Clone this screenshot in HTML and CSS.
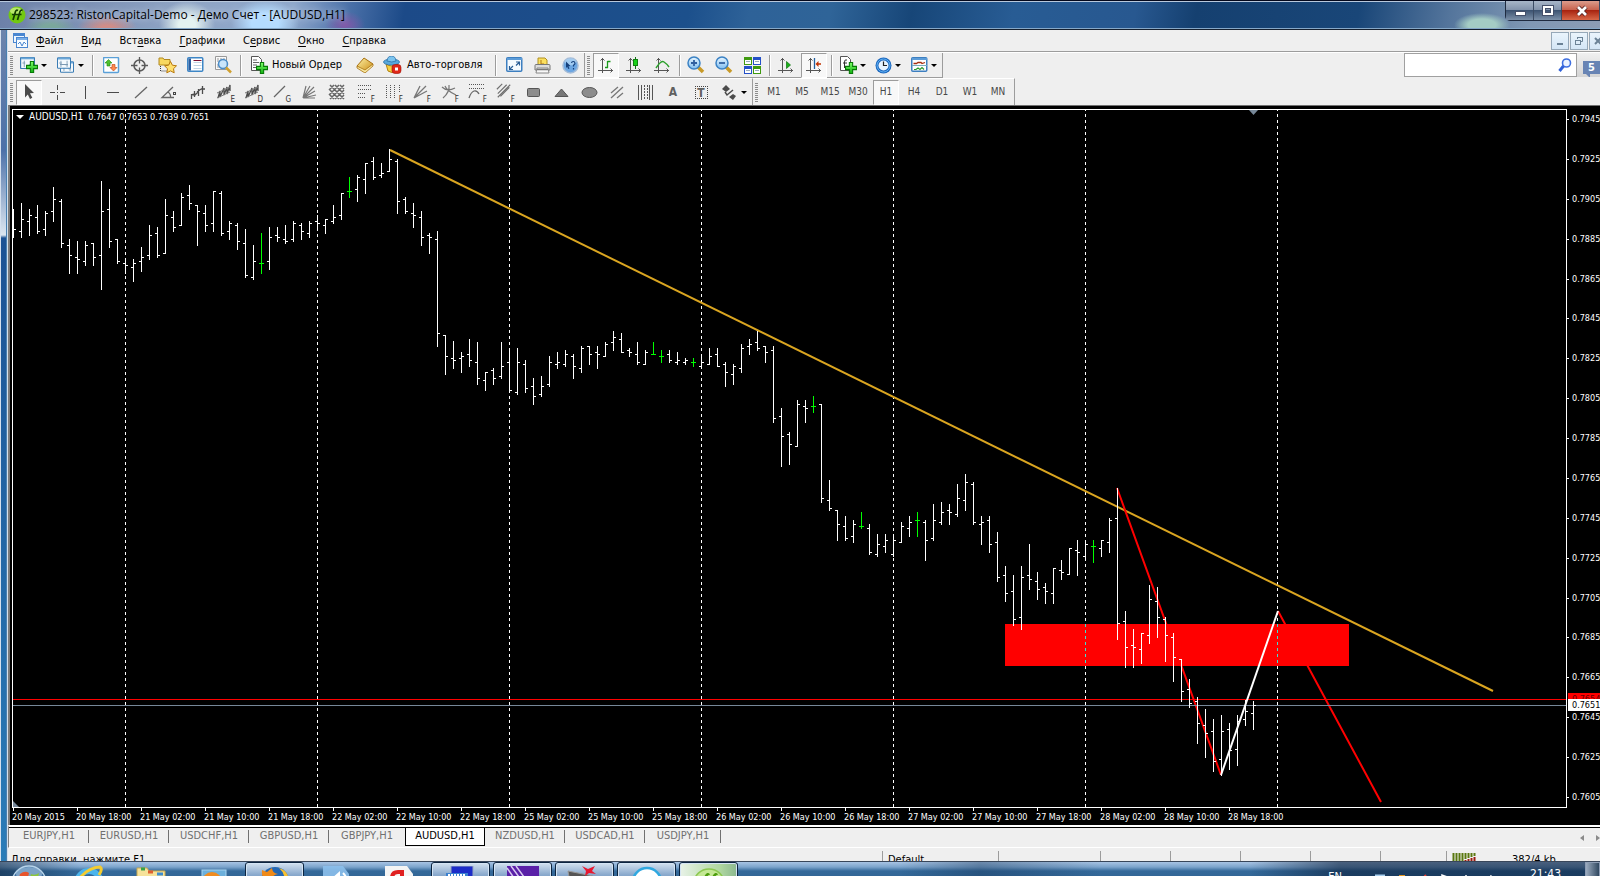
FILE: index.html
```html
<!DOCTYPE html>
<html lang="ru">
<head>
<meta charset="utf-8">
<title>298523: RistonCapital-Demo - Демо Счет - [AUDUSD,H1]</title>
<link rel="stylesheet" href="styles.css">
</head>
<body>
<svg class="defs" aria-hidden="true">
  <defs>
    <linearGradient id="gGlass" x1="0" y1="0" x2="0" y2="1"><stop offset="0" stop-color="#e8f6ff"/><stop offset="1" stop-color="#7fbdf0"/></linearGradient>
    <linearGradient id="gGold" x1="0" y1="0" x2="1" y2="1"><stop offset="0" stop-color="#fff3a8"/><stop offset="1" stop-color="#c98a10"/></linearGradient>
    <linearGradient id="gGreen" x1="0" y1="0" x2="0" y2="1"><stop offset="0" stop-color="#7fff6a"/><stop offset="1" stop-color="#10b010"/></linearGradient>
  </defs>
  <symbol id="plus" viewBox="0 0 11 11"><path d="M4 .5h3v3.500h3.500v3H7v3.500H4V7H.5V4H4z" fill="url(#gGreen)" stroke="#067a06"/></symbol>
  <symbol id="win" viewBox="0 0 16 13"><rect x=".5" y=".5" width="15" height="12" rx="1" fill="#f4f9fd" stroke="#3a7cb4" stroke-width="1.300"/><path d="M1 1.500h14" stroke="#6aa6d8" stroke-width="2"/><path d="M4.500 4v7M2.500 6.500h3M11.500 4v7M9.500 8.500h3" stroke="#7c9ab4"/></symbol>
  <symbol id="axes" viewBox="0 0 16 16"><path d="M4.500 1v15M0 13.500h15M2.500 3.500l2-2 2 2M12.500 11.500l2 2-2 2" fill="none" stroke="#555"/></symbol>
  <symbol id="channel" viewBox="0 0 18 18"><path d="M2 15l2-7v6l4-9v7l3-8v7l3-9v6" fill="none" stroke="#4b4b4b" stroke-width="1.300"/><path d="M1 10l13-6M1 15l13-6" stroke="#777"/></symbol>
  <symbol id="hatch" viewBox="0 0 18 18"><path d="M2 12L12 2M5 15L15 5M1 7l6-6M2 16L16 2" stroke="#707070" stroke-width="1.300"/></symbol>
</svg>

<header class="titlebar">
  <svg class="app-icon" width="18" height="18" viewBox="0 0 18 18"><circle cx="9" cy="9" r="8.500" fill="#72c812"/><ellipse cx="8" cy="5" rx="6" ry="3.500" fill="#c8f080" opacity=".8"/><path d="M5 14l2.500-8.500q.8-2 2.500-1M9.500 14L12 5.500q.8-2 2.500-1M4 8.500h9.500" fill="none" stroke="#123c00" stroke-width="1.700"/></svg>
  <h1 class="title">298523: RistonCapital-Demo - Демо Счет - [AUDUSD,H1]</h1>
  <div class="window-buttons">
    <button aria-label="Свернуть"><svg width="12" height="12"><rect x="1.500" y="6.500" width="10" height="4" fill="#fff" stroke="#45506a"/></svg></button>
    <button aria-label="Развернуть"><svg width="12" height="12"><rect x="2" y="2" width="8" height="7" fill="none" stroke="#45506a" stroke-width="4"/><rect x="2" y="2" width="8" height="7" fill="none" stroke="#fff" stroke-width="2"/></svg></button>
    <button class="close" aria-label="Закрыть"><svg width="12" height="12"><path d="M2 2l8 8M10 2l-8 8" stroke="#522" stroke-width="4.500"/><path d="M2 2l8 8M10 2l-8 8" stroke="#fff" stroke-width="2.700"/></svg></button>
  </div>
</header>

<div class="frame">
  <div class="frame-edge"></div>
  <main class="client">
    <nav class="menubar">
      <svg class="doc-icon" width="15" height="15"><rect x=".5" y=".5" width="11" height="9" fill="#eef6ff" stroke="#4a86d0"/><path d="M1 2h10" stroke="#4a86d0" stroke-width="2"/><rect x="3.500" y="4.500" width="11" height="10" fill="#f6fbff" stroke="#4a86d0"/><path d="M4 6h10" stroke="#7aaee8" stroke-width="2"/><path d="M5 11l2-2 2 4 2-4 2 2" fill="none" stroke="#4a86d0"/></svg>
      <button><u>Ф</u>айл</button><button><u>В</u>ид</button><button>Вст<u>а</u>вка</button><button><u>Г</u>рафики</button><button>С<u>е</u>рвис</button><button><u>О</u>кно</button><button><u>С</u>правка</button>
      <div class="mdi-buttons">
        <button aria-label="Свернуть окно"><svg width="10" height="10"><path d="M2 8h6" stroke="#6b8296" stroke-width="2"/></svg></button>
        <button aria-label="Восстановить окно"><svg width="10" height="10"><path d="M3.500 3V1.500h5v4H7M3 1.500h6" fill="none" stroke="#6b8296"/><rect x="1.500" y="4.500" width="5" height="4" fill="none" stroke="#6b8296"/></svg></button>
        <button aria-label="Закрыть окно"><svg width="10" height="10"><path d="M2 2l6 6M8 2l-6 6" stroke="#6b8296" stroke-width="2"/></svg></button>
      </div>
    </nav>

    <div class="toolbar-row">
      <div class="toolbar main-tools">
        <i class="grip"></i>
        <button class="tool drop" aria-label="Новый график"><svg width="18" height="17"><use href="#win" width="15" height="12"/><use href="#plus" x="6" y="4" width="12" height="12"/></svg></button>
        <button class="tool drop" aria-label="Профили"><svg width="18" height="17"><use href="#win" x="3" y="4" width="14" height="12"/><use href="#win" width="14" height="12"/><path d="M3 7.500h8" stroke="#7c9ab4"/></svg></button>
        <i class="sep"></i>
        <button class="tool" aria-label="Обзор рынка"><svg width="17" height="17"><rect x=".5" y=".5" width="15" height="15" rx="1" fill="#fff" stroke="#5aa0d8" stroke-width="1.500"/><path d="M5.500 2.500l3.500 3.500H7v3H4V6H2z" fill="#4fc030" stroke="#1f8a10" stroke-width=".6"/><path d="M10.500 14l-3.500-3.500h2v-3h3v3h2z" fill="#ff8a50" stroke="#b84010" stroke-width=".6"/></svg></button>
        <button class="tool" aria-label="Окно данных"><svg width="17" height="17"><circle cx="8.500" cy="8.500" r="5.500" fill="none" stroke="#5a5a5a" stroke-width="1.500"/><path d="M8.500 0v6.500M8.500 10.500V17M0 8.500h6.500M10.500 8.500H17" stroke="#5a5a5a" stroke-width="1.300"/></svg></button>
        <button class="tool" aria-label="Навигатор"><svg width="19" height="18"><path d="M1 2h4l1 1.500h6V9H1z" fill="#f8d860" stroke="#b08820"/><path d="M2.500 10v5h6" fill="none" stroke="#333" stroke-dasharray="1 1"/><path d="M12.500 5.500l1.900 3.700 4.100.6-3 2.900.7 4.100-3.700-1.900-3.700 1.900.7-4.100-3-2.900 4.100-.6z" fill="#ffe070" stroke="#b8780c"/></svg></button>
        <button class="tool" aria-label="Терминал"><svg width="17" height="16"><rect x=".75" y=".75" width="15" height="13.500" rx="1" fill="#fff" stroke="#3d86c6" stroke-width="1.500"/><path d="M1.500 1.500h2.500v12h-2.500z" fill="#2a5ea0"/><path d="M6.500 3.500h8" stroke="#7a1030"/><path d="M6.500 5.500h8M6.500 8.500h8M6.500 11.500h8" stroke="#c0d4e4"/></svg></button>
        <button class="tool" aria-label="Тестер"><svg width="18" height="18"><path d="M1.500.5h11v13h-11z" fill="#fafafa" stroke="#999"/><path d="M4 2v4M7 2v3M10 2v3M4 8v4" stroke="#999"/><circle cx="9" cy="8" r="4.500" fill="#bfe0fa" fill-opacity=".85" stroke="#4a8cc8" stroke-width="1.500"/><path d="M12 11.500l5 5" stroke="#d0a030" stroke-width="2.500"/></svg></button>
        <i class="sep"></i>
        <button class="tool text" aria-label="Новый Ордер"><svg width="18" height="18"><path d="M1.500.5h7l3 3v11h-10z" fill="#fff" stroke="#555"/><path d="M3 4h4M3 6.500h6M3 9h4M3 11.500h3" stroke="#666"/><use href="#plus" x="6" y="6" width="12" height="12"/></svg>Новый Ордер</button>
        <button class="tool" aria-label="MetaEditor"><svg width="18" height="16"><path d="M1 9l7-8 9 6-8 8z" fill="url(#gGold)" stroke="#a87010"/><path d="M1 9v2l8 5 8-7V7l-8 6z" fill="#f8e8a0" stroke="#a87010" stroke-width=".8"/></svg></button>
        <button class="tool text wide" aria-label="Авто-торговля"><svg width="19" height="18"><path d="M3 8q6 4 12 0l-2 7q-4 3-8 0z" fill="#f6d040" stroke="#b08010"/><ellipse cx="8.500" cy="6" rx="8" ry="3" fill="#58a8dc" stroke="#2a70a8" stroke-width=".8"/><path d="M4 5q.5-5 4.500-5T13 5q-4 2-9 0z" fill="#7cc4ee" stroke="#2a70a8" stroke-width=".8"/><rect x="9" y="8.500" width="9" height="9" rx="3" fill="#e02818" stroke="#a01008" stroke-width=".6"/><rect x="12" y="11.500" width="3" height="3" fill="#fff"/></svg>Авто-торговля</button>
        <i class="sep"></i>
        <button class="tool" aria-label="Полный экран"><svg width="17" height="16"><rect x=".75" y=".75" width="15" height="13.500" rx="1" fill="#f6fbff" stroke="#3d7fc0" stroke-width="1.500"/><path d="M1 2h15" stroke="#5c9cd8" stroke-width="2"/><path d="M10 5h3.500v3.500M13.500 5L10 8.500M3.500 9v3.500H7M3.500 12.500L7 9" fill="none" stroke="#2a5e96" stroke-width="1.200"/></svg></button>
        <button class="tool" aria-label="Печать"><svg width="17" height="17"><path d="M4 8V1h7l2 2v5z" fill="#fbe060" stroke="#b09020"/><path d="M7 3v4h3" fill="none" stroke="#b07818"/><path d="M1 8.500q0-1 1-1h13q1 0 1 1V13H1z" fill="#dcdcdc" stroke="#777"/><path d="M3 11h11l1 5H2z" fill="#f8f8f8" stroke="#888"/><path d="M3 12.500h11" stroke="#777" stroke-width="1.500"/></svg></button>
        <button class="tool" aria-label="Справка"><svg width="17" height="17"><circle cx="8.500" cy="8.500" r="7.500" fill="#6ca6e2" stroke="#a4bcd8" stroke-width="1.500"/><ellipse cx="8.500" cy="5" rx="5.500" ry="3.500" fill="#b8dcf8" opacity=".7"/><path d="M4 4.500l4.500 4.500-2 .2 1 2.300-1.300.5-1-2.200L4 11z" fill="#15407c"/><path d="M9.500 6q.3-1.500 1.800-1.500T13 6.200q0 1-1.500 2v1.300M11.500 11v1.500" fill="none" stroke="#15407c" stroke-width="1.200"/></svg></button>
      </div>
      <div class="toolbar chart-tools">
        <i class="grip"></i>
        <button class="tool pressed" aria-label="Бары"><svg width="16" height="16"><use href="#axes" width="16" height="16"/><path d="M9.500 4v7M9.500 4.500h3M7 10.500h3" stroke="#1c9a1c" stroke-width="1.300"/></svg></button>
        <button class="tool" aria-label="Свечи"><svg width="16" height="16"><use href="#axes" width="16" height="16"/><path d="M9.500 0v12" stroke="#107010"/><rect x="7.500" y="2.500" width="4" height="6" fill="#18d018" stroke="#108010"/></svg></button>
        <button class="tool" aria-label="Линия"><svg width="16" height="16"><use href="#axes" width="16" height="16"/><path d="M2 11q5-8 8-6t5 5" fill="none" stroke="#2ca02c" stroke-width="1.500"/></svg></button>
        <i class="sep"></i>
        <button class="tool" aria-label="Увеличить"><svg width="18" height="18"><path d="M11 11l5 5" stroke="#c89a28" stroke-width="3.500"/><circle cx="7" cy="7" r="6" fill="url(#gGlass)" stroke="#3b82c4" stroke-width="1.500"/><path d="M4 7h6M7 4v6" stroke="#3060a0" stroke-width="1.800"/></svg></button>
        <button class="tool" aria-label="Уменьшить"><svg width="18" height="18"><path d="M11 11l5 5" stroke="#c89a28" stroke-width="3.500"/><circle cx="7" cy="7" r="6" fill="url(#gGlass)" stroke="#3b82c4" stroke-width="1.500"/><path d="M4 7h6" stroke="#3060a0" stroke-width="1.800"/></svg></button>
        <button class="tool" aria-label="Окна мозаикой"><svg width="17" height="17"><path d="M0 0h8v8H0zM9 9h8v8H9z" fill="#3f9a10"/><path d="M9 0h8v8H9zM0 9h8v8H0z" fill="#2450c8"/><path d="M1 3h6v4H1zM10 3h6v4h-6zM1 12h6v4H1zM10 12h6v4h-6z" fill="#fff"/><path d="M2 4.500h4M11 4.500h4M2 13.500h4M11 13.500h4" stroke="#9ab"/></svg></button>
        <i class="sep"></i>
        <button class="tool" aria-label="Автопрокрутка"><svg width="16" height="16"><use href="#axes" width="16" height="16"/><path d="M8.500 4.500l4 3.500-4 3.500z" fill="#18b018" stroke="#0c700c" stroke-width=".7"/></svg></button>
        <button class="tool pressed" aria-label="Сдвиг графика"><svg width="16" height="16"><use href="#axes" width="16" height="16"/><path d="M8.500 1v11" stroke="#1f5fa0" stroke-width="1.300"/><path d="M15 7h-4" stroke="#c03000" stroke-width="1.500"/><path d="M9.500 7l3-3v6z" fill="#c03000"/></svg></button>
        <i class="sep"></i>
        <button class="tool drop" aria-label="Индикаторы"><svg width="18" height="18"><path d="M1.500.5h7l3 3v11h-10z" fill="#fff" stroke="#555"/><path d="M8 4q-2.500-1-2.500 2v6M4 7h4" fill="none" stroke="#333"/><use href="#plus" x="6" y="6" width="12" height="12"/></svg></button>
        <button class="tool drop" aria-label="Периоды"><svg width="17" height="17"><circle cx="8.500" cy="8.500" r="8" fill="#1d68be"/><circle cx="8.500" cy="8.500" r="6.500" fill="none" stroke="#5fb0f4" stroke-width="1"/><circle cx="8.500" cy="8.500" r="5" fill="#e8f4ff"/><path d="M8.500 4.500v4h3.500" fill="none" stroke="#222" stroke-width="1.200"/></svg></button>
        <button class="tool drop" aria-label="Шаблоны"><svg width="17" height="16"><rect x=".75" y=".75" width="15" height="13.500" rx="1" fill="#fff" stroke="#3d7fc0" stroke-width="1.500"/><path d="M1 2h15" stroke="#5c9cd8" stroke-width="2"/><path d="M2.500 6.500h3l1.500-1h3l1 1 3-1" fill="none" stroke="#a83010" stroke-width="1.300"/><path d="M1 8.500h15" stroke="#7ab"/><path d="M3 12.500h2l2-1.500 2 1.500 2-2 2 2" fill="none" stroke="#2a9a2a" stroke-width="1.200"/></svg></button>
      </div>
      <div class="search">
        <input type="search" aria-label="Поиск">
        <svg width="15" height="15"><circle cx="8.500" cy="5" r="4" fill="#eaf2ff" stroke="#3f6fe0" stroke-width="1.600"/><path d="M5.500 8L1.500 13" stroke="#2f60d8" stroke-width="3"/></svg>
      </div>
      <button class="chat" aria-label="Сообщения"><span>5</span></button>
    </div>

    <div class="toolbar-row second">
      <div class="toolbar draw-tools">
        <i class="grip"></i>
        <button class="tool pressed" aria-label="Курсор"><svg width="18" height="18"><path d="M5 1l9 9-4 .3 2.300 4.500-2.300 1.200-2.200-4.500L5 14.500z" fill="#4b4b4b"/></svg></button>
        <button class="tool" aria-label="Перекрестие"><svg width="18" height="18"><path d="M9.500 2v5M9.500 12v5M2 9.500h5M12 9.500h5M9.500 9v1" stroke="#4b4b4b"/></svg></button>
        <button class="tool" aria-label="Вертикальная линия"><svg width="18" height="18"><path d="M9.500 3v13" stroke="#4b4b4b"/></svg></button>
        <button class="tool" aria-label="Горизонтальная линия"><svg width="18" height="18"><path d="M3 9.500h12" stroke="#4b4b4b"/></svg></button>
        <button class="tool" aria-label="Трендовая линия"><svg width="18" height="18"><path d="M3 15L15 4" stroke="#666" stroke-width="1.300"/></svg></button>
        <button class="tool" aria-label="Угол"><svg width="18" height="18"><path d="M13 4L2 14.500h12M8 9q3 2 2.500 5.500" fill="none" stroke="#666" stroke-width="1.300"/><rect x="13.500" y="9.500" width="2" height="2" fill="none" stroke="#444"/></svg></button>
        <button class="tool" aria-label="Канал регрессии"><svg width="18" height="18"><path d="M3.500 16v-5M3 12l4-1M6.500 14V8M6 13l4-4M10.500 13V6M9 9l4-3M14.500 11V3M13 6h4" fill="none" stroke="#4b4b4b" stroke-width="1.300"/></svg></button>
        <button class="tool sub" data-mark="E" aria-label="Равноудаленный канал"><svg width="18" height="18"><use href="#channel" width="18" height="18"/></svg></button>
        <button class="tool sub" data-mark="D" aria-label="Канал отклонений"><svg width="18" height="18"><use href="#channel" width="18" height="18"/></svg></button>
        <button class="tool sub" data-mark="G" aria-label="Линия Ганна"><svg width="18" height="18"><path d="M2 14L13 3" stroke="#666" stroke-width="1.300"/></svg></button>
        <button class="tool" aria-label="Веер Ганна"><svg width="18" height="18"><path d="M3 15L6 3M3 15L10 3M3 15L14 4M3 15L15 8M3 15L16 12M3 15h12" stroke="#777" stroke-width="1.200"/></svg></button>
        <button class="tool" aria-label="Сетка Ганна"><svg width="18" height="18"><path d="M1 7l5-5M1 12L11 2M2 16L16 2M7 16l9-9M12 16l4-4M1 11l5 5M1 6l10 10M2 2l14 14M7 2l9 9M12 2l4 4" stroke="#666" stroke-width="1.500"/></svg></button>
        <button class="tool sub" data-mark="F" aria-label="Линии Фибоначчи"><svg width="18" height="18"><path d="M2 2.500h14M2 6.500h14M2 10.500h8M2 14.500h8" stroke="#555" stroke-dasharray="1 1"/></svg></button>
        <button class="tool sub" data-mark="F" aria-label="Временные зоны Фибоначчи"><svg width="18" height="18"><path d="M2.500 2v13M6.500 2v13M10.500 2v13M15.500 2v7" stroke="#555" stroke-dasharray="1 1"/></svg></button>
        <button class="tool sub" data-mark="F" aria-label="Веер Фибоначчи"><svg width="18" height="18"><path d="M2 15L8 3M2 15L14 3M2 15L15 8" stroke="#777" stroke-width="1.300"/></svg></button>
        <button class="tool sub" data-mark="F" aria-label="Дуги Фибоначчи"><svg width="18" height="18"><path d="M2 4q5 5 13 1M9 2q1 7-6 13M5 3q2 5 11 9" fill="none" stroke="#777" stroke-width="1.200"/></svg></button>
        <button class="tool sub" data-mark="F" aria-label="Расширение Фибоначчи"><svg width="18" height="18"><path d="M1 1.500h16M1 5.500h16" stroke="#555" stroke-dasharray="1 1"/><path d="M1 15q2-6 5-7t5 3" fill="none" stroke="#666" stroke-width="1.300"/></svg></button>
        <button class="tool sub" data-mark="F" aria-label="Канал Фибоначчи"><svg width="18" height="18"><use href="#hatch" width="16" height="16"/></svg></button>
        <button class="tool" aria-label="Прямоугольник"><svg width="18" height="18"><rect x="3.500" y="5.500" width="12" height="8" rx="1" fill="#8c8c8c" stroke="#555"/></svg></button>
        <button class="tool" aria-label="Треугольник"><svg width="18" height="18"><path d="M3 13.500L9.500 6l6.500 7.500z" fill="#777" stroke="#555"/></svg></button>
        <button class="tool" aria-label="Эллипс"><svg width="18" height="18"><ellipse cx="9.500" cy="9.500" rx="7.500" ry="5" fill="#8c8c8c" stroke="#555"/></svg></button>
        <button class="tool" aria-label="Вилы Эндрюса"><svg width="18" height="18"><path d="M3 10l7-6M3 15L15 4M9 15l6-5" stroke="#777" stroke-width="1.300"/></svg></button>
        <button class="tool" aria-label="Циклические линии"><svg width="18" height="18"><path d="M2.500 2v15M5.500 2v15M13.500 2v15M16.500 2v15" stroke="#555"/><path d="M8.500 2v15M11.500 2v15" stroke="#555" stroke-dasharray="2 1"/></svg></button>
        <button class="tool letter" aria-label="Текст">A</button>
        <button class="tool letter boxed" aria-label="Текстовая метка"><span>T</span></button>
        <button class="tool drop" aria-label="Стрелки"><svg width="18" height="18"><path d="M2 6l4-4 4 4-4 3zM9 14l4-3 3 2-3 4z" fill="#4b4b4b"/><path d="M5 9l2 3 6-5" fill="none" stroke="#4b4b4b" stroke-width="1.500"/></svg></button>
      </div>
      <div class="toolbar periods">
        <i class="grip"></i>
        <button class="tool">M1</button><button class="tool">M5</button><button class="tool">M15</button><button class="tool">M30</button><button class="tool pressed">H1</button><button class="tool">H4</button><button class="tool">D1</button><button class="tool">W1</button><button class="tool">MN</button>
      </div>
    </div>

    <section class="chart" aria-label="AUDUSD,H1">
      <div class="plot">
        <svg class="canvas" width="100%" height="100%">
          <g transform="translate(-13 -110)">
            <g id="days"></g>
            <path class="gold" d="M390 150L1493 691"/>
            <path class="red" d="M1117 488L1221 775M1278 611L1381 802"/>
            <rect x="1005" y="624" width="344" height="42" fill="#f00"/>
            <path d="M1085.500 624v42M1277.500 624v42" stroke="#40e0d0" stroke-dasharray="3 3"/>
            <path d="M13 705.500H4000" stroke="#778899"/>
            <path d="M13 699.500H4000" stroke="#f00"/>
            <g id="bars" shape-rendering="crispEdges"></g>
            <path class="leg" d="M1221 775L1278 611"/>
            <path d="M1249 110h9l-4.500 5z" fill="#778899"/>
          </g>
        </svg>
        <div class="quote"><i></i><b>AUDUSD,H1</b><span>0.7647 0.7653 0.7639 0.7651</span></div>
        <i class="corner"></i>
      </div>
      <div class="prices"><span class="tag ask">0.7654</span><span class="tag bid">0.7651</span></div>
      <div class="times"></div>
    </section>

    <div class="tabs" role="tablist">
      <button role="tab">EURJPY,H1</button><button role="tab">EURUSD,H1</button><button role="tab">USDCHF,H1</button><button role="tab">GBPUSD,H1</button><button role="tab" class="short last">GBPJPY,H1</button><button role="tab" class="active" aria-selected="true">AUDUSD,H1</button><button role="tab">NZDUSD,H1</button><button role="tab">USDCAD,H1</button><button role="tab" class="short">USDJPY,H1</button>
      <div class="tab-arrows"><svg width="21" height="8"><path d="M5 1v6L1 4zM17 1v6l4-3z" fill="#8a8a8a"/></svg></div>
    </div>
    <footer class="status">
      <span class="hint">Для справки, нажмите F1</span><span class="w116">Default</span><span class="w102"></span><span class="w70"></span><span class="w70"></span><span class="w70"></span><span class="w70"></span><span class="w66"></span>
      <span class="link"><svg width="24" height="12"><path d="M1.500 0v12M4.500 0v12M7.500 0v12M10.500 0v12" stroke="#5a7810" stroke-width="2"/><path d="M13.500 0v6M16.500 0v5M19.500 0v4M22.500 0v3" stroke="#5a7810" stroke-width="2"/><path d="M13.500 7v5M16.500 6v6M19.500 5v7M22.500 4v8" stroke="#9a1c10" stroke-width="2"/></svg>382/4 kb</span>
    </footer>
  </main>
</div>

<div class="taskbar">
  <div class="apps">
    <button class="orb" aria-label="Пуск"><svg width="36" height="36"><circle cx="18" cy="18" r="17" fill="#3a6c9c" stroke="#b8d4ea" stroke-width="1.500"/><ellipse cx="18" cy="9" rx="13" ry="7" fill="#a8c8e4" opacity=".6"/><path d="M9 9q5-4 9-1l-2 9H7z" fill="#e8542c"/><path d="M20 9q4 2 8-1l-2 9h-8z" fill="#8cc63c"/></svg></button>
    <button aria-label="Internet Explorer"><svg width="36" height="34"><circle cx="18" cy="18" r="12" fill="none" stroke="#4ab4ec" stroke-width="6"/><path d="M5 18Q16 2 29 2q3 2-1 8" fill="none" stroke="#f4cc30" stroke-width="3"/></svg></button>
    <button aria-label="Проводник"><svg width="36" height="34"><path d="M4 3h10l2 3h16v24H4z" fill="#f6e29a" stroke="#c8a850"/><path d="M8 4h4" stroke="#38a048" stroke-width="3"/><path d="M15 7h5" stroke="#e06030" stroke-width="3"/><path d="M24 9h6" stroke="#3c8cd0" stroke-width="3"/></svg></button>
    <button aria-label="Медиаплеер"><svg width="36" height="34"><rect x="7" y="5" width="24" height="24" fill="#6cb0dc" stroke="#a8d4f0"/><circle cx="17" cy="17" r="10" fill="#f08c20"/><circle cx="17" cy="17" r="5" fill="#fbe8c8"/></svg></button>
    <button class="open" aria-label="Firefox"><svg width="36" height="34"><circle cx="18" cy="15" r="14" fill="#2468b4"/><path d="M5 4l5 2 5-4q0 5 6 6-8 2-7 8-10 0-9-12z" fill="#f08a18"/><path d="M22 2q10 3 10 14h-5q2-8-5-14z" fill="#f8c030"/></svg></button>
    <button aria-label="Звук"><svg width="36" height="34"><path d="M4 1h20l6 8v22H4z" fill="#8cc0ec" opacity=".9"/><path d="M12 14l9-8v20z" fill="#fff"/><path d="M24 8q6 6 2 14" fill="none" stroke="#fff" stroke-width="2"/></svg></button>
    <button aria-label="Яндекс"><svg width="36" height="34"><path d="M4 1h22l6 8v24H4z" fill="#f4f4f4"/><path d="M21 26V7h-4q-6 0-6 6t6 5" fill="none" stroke="#e02020" stroke-width="4"/></svg></button>
    <button class="open" aria-label="Клавиатура"><svg width="36" height="34"><rect x="8" y="0" width="22" height="18" fill="#1c2cc8" stroke="#98a8c0"/><rect x="3" y="7" width="22" height="16" fill="#3a80d0"/><path d="M5 9h18M5 12h18" stroke="#fff" stroke-width="2" stroke-dasharray="2 1"/></svg></button>
    <button class="open" aria-label="График"><svg width="36" height="34"><rect x="2" y="0" width="32" height="32" fill="#5a20a8"/><path d="M2 2l14 20M6 0l16 22M11 0l16 22" stroke="#d8c8f0" stroke-width="1.500"/></svg></button>
    <button class="open" aria-label="Запись"><svg width="36" height="34"><path d="M1 5l25 5v12L3 17z" fill="#555" stroke="#999"/><path d="M15 0l6 3 7-3-3 5 4 3-7-1-4 3 1-5z" fill="#e81830"/></svg></button>
    <button class="open" aria-label="Облако"><svg width="36" height="34"><circle cx="18" cy="16" r="14" fill="#fff" stroke="#30a8e0" stroke-width="2.500"/></svg></button>
    <button class="open green" aria-label="MetaTrader"><svg width="36" height="34"><ellipse cx="18" cy="17" rx="15" ry="14" fill="#c4e894" stroke="#8cc850" stroke-width="1.500"/><path d="M12 18l3-8q2-3 3-1M20 18l3-8q2-3 3-1" fill="none" stroke="#4c9c0c" stroke-width="2.500"/></svg></button>
  </div>
  <div class="tray"><span class="lang">EN</span>
    <svg width="120" height="12"><path d="M1 3h10M0 5h12" stroke="#a8d0f0" stroke-width="3"/><path d="M25 2h6v3h4v6H25z" fill="#e89820"/><path d="M52 2l-3 3v6" stroke="#e84030" stroke-width="2" fill="none"/><path d="M68 12V2l8 3" stroke="#fff" fill="none" stroke-width="1.500"/><path d="M92 4h14M92 2v6" stroke="#fff" stroke-width="1.500"/><path d="M117 2v8l-3-4" stroke="#fff" fill="#fff"/></svg>
    <time>21:43</time><button class="peek" aria-label="Свернуть все окна"></button></div>
</div>
<script src="chart.js"></script>
</body>
</html>
```
FILE: chart.js
```js
// One bar per hour, 8px apart: [high, low, open, close] as y positions.
// A trailing 1 marks a bar whose open equals its close.
const bars = [
[209,238,229,229],[203,238,231,219],[209,236,221,215],[205,234,217,231],[211,236,229,213],[187,222,211,199],[199,248,201,243],[239,274,245,255],
[241,274,257,259],[241,266,261,245],[243,266,243,257],[181,290,255,211],[189,248,209,241],[239,264,239,261],[259,274,263,265],[259,282,267,263],
[247,272,261,257],[225,260,255,235],[227,258,233,255],[199,254,253,215],[211,232,217,227],[193,226,225,197],[185,210,195,203],[205,246,205,211],
[205,232,213,225],[191,232,223,191],[191,236,193,233],[221,240,231,223],[223,250,225,241],[229,278,243,275],[245,280,277,261],[233,274,263,263,1],
[227,270,261,237],[227,242,235,237],[225,244,239,241],[221,242,239,223],[223,240,225,231],[221,238,233,223],[215,231,221,223],[219,234,225,219],
[205,224,221,217],[193,220,215,193],[177,198,191,191,1],[175,202,189,177],[163,194,179,163],[157,180,161,177],[163,178,175,173],[149,172,171,159],
[159,214,161,201],[197,214,199,211],[203,228,213,215],[211,246,217,237],[233,254,235,237],[231,347,239,333],[335,375,335,356],[341,369,358,360],
[352,373,358,356],[339,367,354,360],[342,385,362,378],[372,391,380,372],[368,385,370,378],[342,379,376,366],[348,393,362,390],[348,395,392,362],
[360,393,364,388],[378,405,386,396],[376,397,394,386],[356,387,384,362],[352,369,364,362],[350,367,364,354],[354,379,356,366],[346,373,368,348],
[346,365,346,354],[346,369,352,354],[342,357,356,344],[331,351,342,337],[333,353,339,352],[348,357,350,352],[342,365,354,362],[350,365,364,352],
[342,355,354,354,1],[350,363,356,356,1],[350,363,354,360],[352,365,362,360],[358,365,362,360],[358,367,362,362,1],[354,368,366,362],[348,365,364,356],
[348,367,354,366],[362,387,364,372],[364,385,374,366],[344,373,368,348],[339,355,346,344],[331,351,342,348],[346,363,346,352],[346,423,350,418],
[408,467,416,436],[432,465,434,444],[400,447,446,404],[400,423,406,408],[396,413,406,406,1],[404,503,404,498],[480,511,500,508],[510,541,510,524],
[516,541,526,538],[520,543,536,524],[512,529,526,526,1],[524,555,528,552],[534,557,554,544],[534,553,546,540],[534,557,554,540],[522,543,542,526],
[516,537,528,522],[512,537,520,520,1],[520,561,522,540],[504,541,538,520],[502,525,522,512],[504,525,510,512],[484,517,514,498],[474,511,500,482],
[482,525,484,522],[516,545,524,522],[516,553,520,544],[532,582,542,577],[566,602,575,593],[575,626,591,619],[566,630,617,577],[544,590,575,579],
[572,600,581,589],[583,604,587,591],[568,604,593,568],[560,580,570,572],[548,575,574,548],[540,576,550,552],[540,560,556,544],[540,563,546,546,1],
[540,557,548,540],[518,553,542,520],[488,640,518,623],[611,668,621,647],[629,668,645,647],[633,664,649,633],[585,644,635,599],[587,638,601,617],
[617,662,619,635],[633,682,637,657],[659,702,659,691],[679,708,689,703],[697,744,701,723],[709,758,725,733],[719,772,731,761],[715,776,759,731],
[723,770,729,750],[715,766,749,721],[700,726,719,711],[701,730,713,705]
];
const NS = 'http://www.w3.org/2000/svg';
const draw = (parent, d, cls) => {
  const p = document.createElementNS(NS, 'path');
  p.setAttribute('d', d);
  p.setAttribute('class', cls);
  parent.append(p);
};

let up = '', flat = '';
bars.forEach(([h, l, o, c, same], i) => {
  const x = 13 + 8 * i;
  const d = `M${x} ${h}h1V${l}h-1zM${x - 2} ${o}h2v1h-2zM${x + 1} ${c}h2v1h-2z`;
  if (same) flat += d; else up += d;
});
const barLayer = document.getElementById('bars');
draw(barLayer, up, 'bar');
draw(barLayer, flat, 'bar flat');

let days = '';
for (let x = 125; x < 1300; x += 192) days += `M${x + 0.5} 108V2000`;
draw(document.getElementById('days'), days, 'day');

const prices = document.querySelector('.prices');
for (let p = 7945; p >= 7605; p -= 20) {
  const s = document.createElement('span');
  s.textContent = '0.' + p;
  prices.append(s);
}
const times = document.querySelector('.times');
const stamps = ['20 May 2015', '20 May 18:00'];
for (const d of [21, 22, 25, 26, 27, 28])
  for (const t of ['02:00', '10:00', '18:00']) stamps.push(`${d} May ${t}`);
for (const t of stamps) {
  const s = document.createElement('span');
  s.textContent = t;
  times.append(s);
}
```
FILE: styles.css
```css
* { box-sizing: border-box; }
body {
  margin: 0;
  height: 100vh;
  display: flex;
  flex-direction: column;
  overflow: hidden;
  background: #efefef;
  color: #000;
  font: 11px/14px "DejaVu Sans Condensed", "Open Sans", sans-serif;
}
button { margin: 0; padding: 0; border: 0; background: none; font: inherit; color: inherit; }
svg { display: block; flex: none; }
.defs { position: absolute; width: 0; height: 0; }

/* Title bar */
.titlebar {
  flex: none;
  height: 30px;
  display: flex;
  align-items: flex-start;
  padding-left: 8px;
  border-top: 1px solid #04081c;
  border-bottom: 1px solid #16202e;
  box-shadow: inset 0 1px #b8c8dc, inset 0 -1px #86a8c8;
  background:
    radial-gradient(ellipse 26px 12px at 50px 27px, #7aa79c 30%, transparent),
    radial-gradient(ellipse 30px 14px at 107px 27px, #d08d88 20%, transparent),
    radial-gradient(ellipse 28px 24px at 187px 24px, #e4f2f0 30%, transparent),
    radial-gradient(ellipse 34px 24px at 265px 22px, #b4dcff 40%, transparent),
    radial-gradient(ellipse 20px 14px at 345px 24px, #7c5aa8 10%, transparent),
    radial-gradient(ellipse 28px 12px at 1482px 24px, #a4ccc4 50%, transparent),
    linear-gradient(100deg, #6c80a8 0, #8fa4c4 180px, #8fa8cc 290px, #4a70a8 345px, #1c4a88 400px, #1c508c 680px, #2e6298 740px, #2f6498 820px, #174678 900px, #285c94 1000px, #285890 1120px, #154070 1180px, #194678 1340px, #54759c 1430px, #8098b4 1510px, #8c9cb4 100%);
}
.app-icon { margin-top: 5px; }
.title { flex: 1; margin: 5px 0 0 3px; font: 400 12px/18px "Open Sans", sans-serif; text-shadow: 0 0 6px #dce6f2; }
.window-buttons { display: flex; height: 20px; border: 1px solid #1f2b40; border-top: 0; border-right: 0; border-radius: 0 0 0 5px; }
.window-buttons button { width: 28px; display: flex; justify-content: center; align-items: center; border-right: 1px solid #3c4c64; background: linear-gradient(#a8b6c8, #8494ac 45%, #3d5472 50%, #7c90a8); }
.window-buttons .close { width: 38px; padding-left: 2px; background: linear-gradient(#dc9c8c, #c86450 45%, #a82410 50%, #d86848); }

/* Window frame */
.frame { flex: 1; min-height: 0; display: flex; }
.frame-edge { flex: none; width: 8px; border: solid #d4e0ee; border-width: 0 1px; box-shadow: inset -1px 0 #4880b0; background: linear-gradient(#6c84ac, #4c70a8 120px, #dce6f0 205px, #1c5294 208px, #2a7cb8 100%); }
.client { flex: 1; min-width: 0; display: flex; flex-direction: column; }

/* Menu */
.menubar { flex: none; height: 22px; display: flex; align-items: center; gap: 18px; padding-left: 5px; border-bottom: 1px solid #9c9c9c; }
.menubar u { text-underline-offset: 2px; }
.doc-icon { margin-right: -10px; }
.mdi-buttons { margin-left: auto; display: flex; gap: 1px; margin-right: -7px; }
.mdi-buttons button { width: 18px; height: 18px; display: flex; align-items: center; justify-content: center; border: 1px solid #96a8b8; background: linear-gradient(#eaf4fc, #d4e6f6); }

/* Toolbars */
.toolbar-row { flex: none; height: 26px; display: flex; border-top: 1px solid #fff; }
.toolbar-row.second { height: 27px; border-top: 0; }
.toolbar { display: flex; align-items: center; height: 100%; border-right: 1px solid #9c9c9c; border-bottom: 1px solid #9c9c9c; }
.second .toolbar { border-top: 1px solid #fff; border-bottom: 0; }
.grip { flex: none; width: 3px; height: 19px; margin: 0 2px 0 2px; background: repeating-linear-gradient(#8c8c8c 0 1px, #efefef 1px 2px); }
.main-tools { width: 577px; }
.chart-tools { width: 358px; }
.draw-tools { width: 745px; }
.periods { width: 262px; }
.tool { flex: none; width: 28px; height: 25px; display: flex; align-items: center; justify-content: center; }
.tool.drop { width: 37px; justify-content: flex-start; gap: 3px; padding-left: 5px; }
.tool.drop::after { content: ""; border: 3px solid transparent; border-top-color: #000; border-bottom: 0; }
.chart-tools .tool.drop { width: 36px; }
.main-tools .tool.text { width: 106px; gap: 4px; justify-content: flex-start; padding-left: 5px; }
.main-tools .tool.text.wide { width: 113px; gap: 5px; padding-left: 4px; }
.tool.pressed { width: 26px; margin: 0 1px; border: 1px solid; border-color: #9c9c9c #fff #fff #9c9c9c; background: #f8f8f8; }
.sep { flex: none; width: 8px; height: 21px; background: linear-gradient(90deg, transparent 3px, #9c9c9c 3px 4px, #fff 4px 5px, transparent 5px); }
.chart-tools .sep { width: 6px; }
.tool.sub { position: relative; }
.tool.sub::after { content: attr(data-mark); position: absolute; right: 4px; bottom: 1px; font-size: 8px; line-height: 8px; color: #333; background: #efefef; }
.letter { font-weight: 700; font-size: 12px; color: #606060; }
.boxed span { width: 13px; height: 13px; line-height: 12px; border: 1px dotted #444; text-align: center; }
.periods .tool { font-size: 10px; color: #484848; }
.search { margin: 0 0 1px auto; width: 173px; display: flex; align-items: center; padding-right: 3px; background: #fff; border: 1px solid #a0a0a0; }
.search input { flex: 1; min-width: 0; height: 100%; border: 0; outline: 0; background: none; }
.chat { width: 23px; height: 24px; padding: 4px 0 0 6px; background: linear-gradient(#f0f0f0, #d4d4d4); overflow: hidden; }
.chat span { position: relative; display: block; height: 13px; background: #6884b4; color: #fff; font-weight: 700; line-height: 13px; text-align: center; }
.chat span::after { content: ""; position: absolute; left: 3px; top: 13px; border-left: 4px solid transparent; border-top: 4px solid #6884b4; }

/* Chart */
.chart { flex: 1; min-height: 0; display: grid; grid-template: 1fr 17px / 1fr 33px; padding: 3px 0 0 2px; border-left: 2px solid #7c7c7c; border-top: 1px solid #707070; background: #000; color: #fff; font-size: 9px; line-height: 12px; }
.plot { position: relative; overflow: hidden; border: 1px solid #fff; }
.canvas { position: absolute; left: 0; top: 0; }
.bar { fill: #fff; }
.bar.flat { fill: #0f0; }
.day { stroke: #fff; stroke-dasharray: 3 3; }
.gold { stroke: #daa520; stroke-width: 2; }
.red { stroke: #f00; stroke-width: 2; }
.leg { stroke: #fff; stroke-width: 2; }
.quote { position: relative; display: flex; align-items: center; gap: 5px; padding: 1px 0 0 3px; }
.quote i { border: 4px solid transparent; border-top-color: #fff; border-bottom: 0; }
.quote b { font-weight: 400; font-size: 10px; }
.corner { position: absolute; left: 0; bottom: 0; border: 3px solid transparent; border-left-color: #778899; border-bottom-color: #778899; }
.prices { position: relative; display: flex; flex-direction: column; justify-content: space-between; padding: 4px 0 5px; }
.prices span { position: relative; padding-left: 5px; }
.prices span::before { content: ""; position: absolute; left: 0; top: 6px; width: 2px; height: 1px; background: #fff; }
.prices .tag { position: absolute; left: 1px; right: 0; padding-left: 4px; height: 12px; }
.prices .ask { top: 584px; background: #f00; color: #600; }
.prices .bid { top: 590px; background: #fff; color: #000; z-index: 1; }
.times { grid-column: 1 / -1; display: flex; }
.times span { flex: none; width: 64px; padding-top: 3px; white-space: nowrap; background: linear-gradient(#fff, #fff) 1px 0 / 1px 3px no-repeat; }

/* Chart tabs */
.tabs { flex: none; height: 23px; display: flex; align-items: flex-start; border-top: 2px solid #fff; border-left: 1px solid #808080; border-bottom: 1px solid #fff; box-shadow: inset 0 1px #000; color: #707070; }
.tabs button { position: relative; width: 80px; height: 19px; padding-bottom: 1px; }
.tabs .short { width: 76px; }
.tabs button:not(.active)::after { content: ""; position: absolute; right: 0; top: 3px; width: 1px; height: 13px; background: #707070; }
.tabs .last::after { visibility: hidden; }
.tabs .active { border: 1px solid #000; background: #fff; color: #000; }
.tab-arrows { margin: 7px 0 0 auto; }

/* Status bar */
.status { flex: none; height: 13px; display: flex; overflow: hidden; padding-top: 3px; }
.status span { flex: none; padding: 2px 5px 0; border-left: 1px solid #9c9c9c; white-space: nowrap; }
.status .hint { flex: 1; padding-left: 3px; border: 0; }
.w116 { width: 116px; }
.w102 { width: 102px; }
.w70 { width: 70px; }
.w66 { width: 66px; }
.status .link { width: 154px; display: flex; gap: 36px; }

/* Taskbar, cut by the bottom of the screen */
.taskbar { flex: none; height: 15px; display: flex; justify-content: space-between; overflow: hidden; border-top: 1px solid #38465a; background: linear-gradient(90deg, #0a203888, transparent 80px, transparent 900px, #16345866 980px, transparent 1100px, transparent 1250px, #0a1e3a99 1340px), linear-gradient(#a8c4e4, #7ca4cc 5px, #34699a 9px, #2c5c88 40px); }
.apps { display: flex; padding-left: 2px; }
.apps button { flex: none; width: 59px; height: 40px; margin: 0 1px 0 2px; padding-top: 3px; display: flex; justify-content: center; border-radius: 3px; }
.apps .orb { width: 54px; margin-left: 0; }
.apps .open { border: 1px solid #0c2440; box-shadow: inset 0 0 0 1px #d4e4f4; background: linear-gradient(#d4e2f0, #88a8cc 12px, #4c78a8); }
.apps .open.green { background: linear-gradient(90deg, #e8f2e8, #b0d8a0 70%, #8cb890); }
.tray { display: flex; color: #fff; padding-top: 6px; line-height: 16px; }
.lang { margin: 1px 32px 0 0; }
.tray svg { margin-top: 5px; }
.tray time { margin: -2px 24px 0 36px; font-size: 12px; }
.peek { width: 15px; height: 40px; margin-top: -6px; border: 1px solid #8c9cb4; background: linear-gradient(90deg, #9cacc0, #304860); }
```
